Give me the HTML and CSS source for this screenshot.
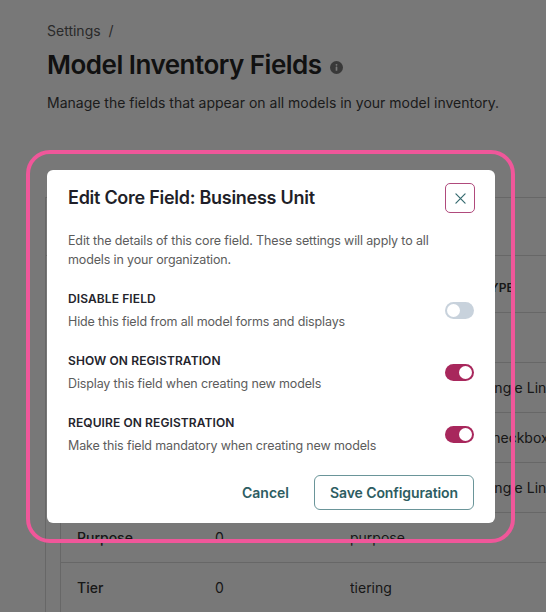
FILE: index.html
```html
<!DOCTYPE html>
<html lang="en">
<head>
<meta charset="utf-8">
<title>Model Inventory Fields</title>
<link rel="stylesheet" href="styles.css">
</head>
<body>
<div class="page">
  <div class="breadcrumb">Settings <span class="sep">/</span></div>
  <h1 class="title">Model Inventory Fields
    <svg class="info" viewBox="0 0 14 14" width="13" height="13" aria-hidden="true">
      <circle cx="7" cy="7" r="7" fill="#7a7a7a"/>
      <rect x="6.1" y="6" width="1.8" height="4.6" rx="0.5" fill="#fff"/>
      <circle cx="7" cy="4.1" r="1" fill="#fff"/>
    </svg>
  </h1>
  <p class="subtitle">Manage the fields that appear on all models in your model inventory.</p>

  <div class="card">
    <div class="toolbar"></div>
    <div class="table">
      <div class="row head">
        <span>Field Name</span><span>Models</span><span>Key</span><span>Type</span>
      </div>
      <div class="row"><span>Business Unit</span><span>0</span><span>business_unit</span><span></span></div>
      <div class="row"><span>Description</span><span>0</span><span>description</span><span>Single Line</span></div>
      <div class="row"><span>In Production</span><span>0</span><span>in_production</span><span>Checkbox</span></div>
      <div class="row"><span>Owner</span><span>0</span><span>owner</span><span>Single Line</span></div>
      <div class="row"><span>Purpose</span><span>0</span><span>purpose</span><span></span></div>
      <div class="row"><span>Tier</span><span>0</span><span>tiering</span><span></span></div>
    </div>
  </div>
</div>

<div class="overlay"></div>

<div class="ring">
  <div class="modal">
    <div class="modal-head">
      <h2 class="modal-title">Edit Core Field: Business Unit</h2>
      <button class="close" aria-label="Close">
        <svg viewBox="0 0 12 12" width="11" height="11" aria-hidden="true">
          <path d="M1 1 L11 11 M11 1 L1 11" stroke="#356a6f" stroke-width="1.3" stroke-linecap="round" fill="none"/>
        </svg>
      </button>
    </div>
    <p class="modal-desc">Edit the details of this core field. These settings will apply to all models in your organization.</p>

    <div class="setting">
      <div class="setting-text">
        <div class="setting-label">Disable Field</div>
        <div class="setting-desc">Hide this field from all model forms and displays</div>
      </div>
      <span class="toggle"><span class="knob"></span></span>
    </div>

    <div class="setting">
      <div class="setting-text">
        <div class="setting-label">Show on Registration</div>
        <div class="setting-desc">Display this field when creating new models</div>
      </div>
      <span class="toggle on"><span class="knob"></span></span>
    </div>

    <div class="setting">
      <div class="setting-text">
        <div class="setting-label">Require on Registration</div>
        <div class="setting-desc">Make this field mandatory when creating new models</div>
      </div>
      <span class="toggle on"><span class="knob"></span></span>
    </div>

    <div class="modal-foot">
      <button class="btn-cancel">Cancel</button>
      <button class="btn-save">Save Configuration</button>
    </div>
  </div>
</div>
</body>
</html>
```

FILE: styles.css
```css
* { box-sizing: border-box; }

html, body {
  margin: 0;
  padding: 0;
  height: 100%;
  overflow: hidden;
}

body {
  font-family: Inter, "Noto Sans", "Liberation Sans", sans-serif;
  background: #ffffff;
  color: #222;
}

.page {
  padding: 21px 0 0 47px;
}

.breadcrumb {
  font-size: 14px;
  line-height: 20px;
  color: #5a5a5a;
}

.breadcrumb .sep {
  margin-left: 4px;
}

.title {
  margin: 8px 0 0;
  font-size: 26px;
  line-height: 32px;
  font-weight: 600;
  color: #262626;
  letter-spacing: -0.5px;
  display: flex;
  align-items: center;
  gap: 8px;
}

.info {
  margin-top: 4px;
}

.subtitle {
  margin: 12px 0 0;
  font-size: 14px;
  line-height: 20px;
  color: #3c3c3c;
}

.card {
  margin: 84px 0 0 -2px;
  border-left: 1px solid #dcdcdc;
  border-top: 1px solid #dcdcdc;
}

.toolbar {
  height: 58px;
  border-bottom: 1px solid #dcdcdc;
}

.table {
  margin-left: 14px;
  border-left: 1px solid #dcdcdc;
}

.row {
  display: grid;
  grid-template-columns: 138px 135px 132px 1fr;
  padding-left: 16px;
  height: 50px;
  align-items: center;
  border-bottom: 1px solid #dcdcdc;
  font-size: 14px;
  color: #333;
  white-space: nowrap;
  overflow: hidden;
}

.row span {
  overflow: hidden;
}

.row span:first-child {
  font-weight: 500;
}

.row.head {
  height: 57px;
  padding-top: 6px;
  font-size: 12px;
  font-weight: 600;
  text-transform: uppercase;
  color: #333;
}

.overlay {
  position: fixed;
  inset: 0;
  background: rgba(0, 0, 0, 0.53);
}

.ring {
  position: absolute;
  left: 26px;
  top: 150px;
  width: 489px;
  padding: 16px 16px 16px 17px;
  border: 4px solid #f0579a;
  border-radius: 24px;
}

.modal {
  width: 448px;
  background: #ffffff;
  border-radius: 6px;
  padding: 13px 20px 13px 21px;
}

.modal-head {
  display: flex;
  align-items: center;
  justify-content: space-between;
  height: 30px;
}

.modal-title {
  margin: 0;
  font-size: 18px;
  line-height: 24px;
  font-weight: 600;
  letter-spacing: -0.27px;
  color: #1f1f29;
}

.close {
  width: 30px;
  height: 30px;
  border: 1px solid #b04a7c;
  border-radius: 5px;
  background: #fff;
  padding: 0;
  display: flex;
  align-items: center;
  justify-content: center;
}

.modal-desc {
  margin: 18px 0 0;
  max-width: 385px;
  font-size: 12.5px;
  letter-spacing: -0.14px;
  line-height: 19px;
  color: #5c5c5c;
}

.setting {
  display: flex;
  align-items: center;
  justify-content: space-between;
  margin-top: 21px;
}

.setting-label {
  font-size: 12px;
  line-height: 18px;
  font-weight: 600;
  text-transform: uppercase;
  color: #24242c;
  letter-spacing: 0.1px;
}

.setting-desc {
  margin-top: 4px;
  font-size: 12.5px;
  letter-spacing: -0.14px;
  line-height: 19px;
  color: #5c5c5c;
}

.toggle {
  width: 29px;
  height: 17px;
  border-radius: 9px;
  background: #c8d2dc;
  display: flex;
  align-items: center;
  padding: 0 2px;
  margin-right: 1px;
}

.toggle.on {
  background: #a8275c;
  justify-content: flex-end;
}

.knob {
  width: 13px;
  height: 13px;
  border-radius: 50%;
  background: #ffffff;
}

.modal-foot {
  display: flex;
  justify-content: flex-end;
  align-items: center;
  gap: 13px;
  margin-top: 20px;
}

.btn-cancel,
.btn-save {
  font-family: inherit;
  font-size: 14px;
  font-weight: 600;
  color: #2d5d62;
  background: #fff;
  height: 35px;
  white-space: nowrap;
  cursor: pointer;
}

.btn-cancel {
  border: none;
  padding: 0 12px;
}

.btn-save {
  border: 1px solid #6a9599;
  border-radius: 6px;
  padding: 0;
  width: 160px;
  margin-right: 1px;
  letter-spacing: -0.1px;
}
```
